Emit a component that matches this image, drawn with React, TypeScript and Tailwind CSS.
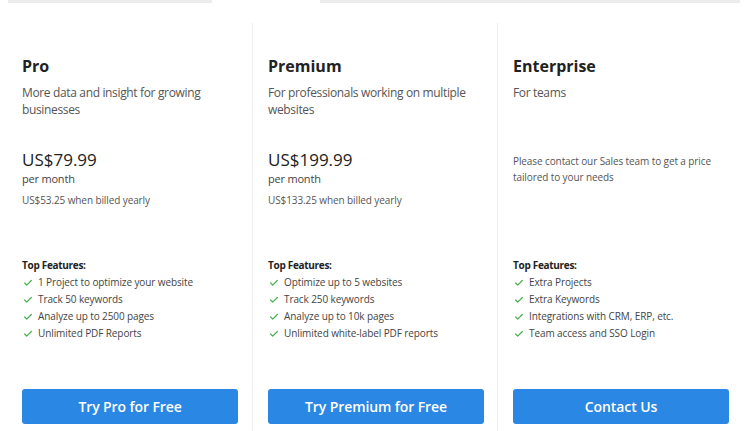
import { Check } from 'lucide-react';

type Plan = {
  name: string;
  blurb: string;
  price?: string;
  yearly?: string;
  note?: string;
  features: string[];
  cta: string;
};

const plans: Plan[] = [
  {
    name: 'Pro',
    blurb: 'More data and insight for growing businesses',
    price: 'US$79.99',
    yearly: 'US$53.25 when billed yearly',
    features: [
      '1 Project to optimize your website',
      'Track 50 keywords',
      'Analyze up to 2500 pages',
      'Unlimited PDF Reports',
    ],
    cta: 'Try Pro for Free',
  },
  {
    name: 'Premium',
    blurb: 'For professionals working on multiple websites',
    price: 'US$199.99',
    yearly: 'US$133.25 when billed yearly',
    features: [
      'Optimize up to 5 websites',
      'Track 250 keywords',
      'Analyze up to 10k pages',
      'Unlimited white-label PDF reports',
    ],
    cta: 'Try Premium for Free',
  },
  {
    name: 'Enterprise',
    blurb: 'For teams',
    note: 'Please contact our Sales team to get a price tailored to your needs',
    features: ['Extra Projects', 'Extra Keywords', 'Integrations with CRM, ERP, etc.', 'Team access and SSO Login'],
    cta: 'Contact Us',
  },
];

export default function App(): JSX.Element {
  return (
    <div
      className="h-[431px] w-[750px] overflow-hidden bg-white text-[#222]"
      style={{ fontFamily: '"Open Sans", "Liberation Sans", sans-serif' }}
    >
      {/* tab strip remnants */}
      <div className="flex h-[3px] pl-[8px] pr-[10px]">
        <div className="w-[204px] bg-[#ececec]" />
        <div className="w-[108px]" />
        <div className="flex-1 bg-[#ececec]" />
      </div>

      <div className="mt-[20px] flex pl-[7px]">
        {plans.map((p, i) => (
          <PlanColumn key={p.name} plan={p} divider={i > 0} />
        ))}
      </div>
    </div>
  );
}

function PlanColumn({ plan, divider }: { plan: Plan; divider: boolean }): JSX.Element {
  return (
    <div
      className={
        'flex h-[408px] w-[245px] shrink-0 flex-col px-[15px] pt-[31px] ' +
        (divider ? 'border-l border-[#eeeeee]' : '')
      }
    >
      <div className="h-[95px]">
        <h2 className="text-[16px] leading-[24px] font-bold text-[#222]">{plan.name}</h2>
        <p className="mt-[6px] text-[12px] leading-[17px] tracking-[-0.35px] text-[#555]">{plan.blurb}</p>
      </div>

      <div className="h-[107px]">
        {plan.price ? (
          <>
            <div className="text-[17px] leading-[22px] text-[#222]">{plan.price}</div>
            <div className="text-[11px] leading-[16px] tracking-[-0.2px] text-[#444]">per month</div>
            <div className="mt-[5px] text-[10px] leading-[16px] tracking-[-0.1px] text-[#555]">{plan.yearly}</div>
          </>
        ) : (
          <p className="pt-[4px] pr-[10px] text-[10px] leading-[16px] tracking-[-0.1px] text-[#555]">
            {plan.note}
          </p>
        )}
      </div>

      <div className="h-[133px] pt-[1px]">
        <div className="text-[10px] leading-[17px] font-bold tracking-[-0.3px] text-[#222]">Top Features:</div>
        <ul>
          {plan.features.map((f) => (
            <li
              key={f}
              className="flex items-center gap-[5px] text-[10px] leading-[17px] tracking-[-0.1px] text-[#444]"
            >
              <Check className="ml-[1px] h-[10px] w-[10px] shrink-0 text-[#4caf50]" strokeWidth={3} />
              {f}
            </li>
          ))}
        </ul>
      </div>

      <button
        type="button"
        className="h-[35px] w-[216px] rounded-[3px] bg-[#2a87e3] text-[14px] font-semibold tracking-[-0.1px] text-white"
      >
        {plan.cta}
      </button>
    </div>
  );
}
